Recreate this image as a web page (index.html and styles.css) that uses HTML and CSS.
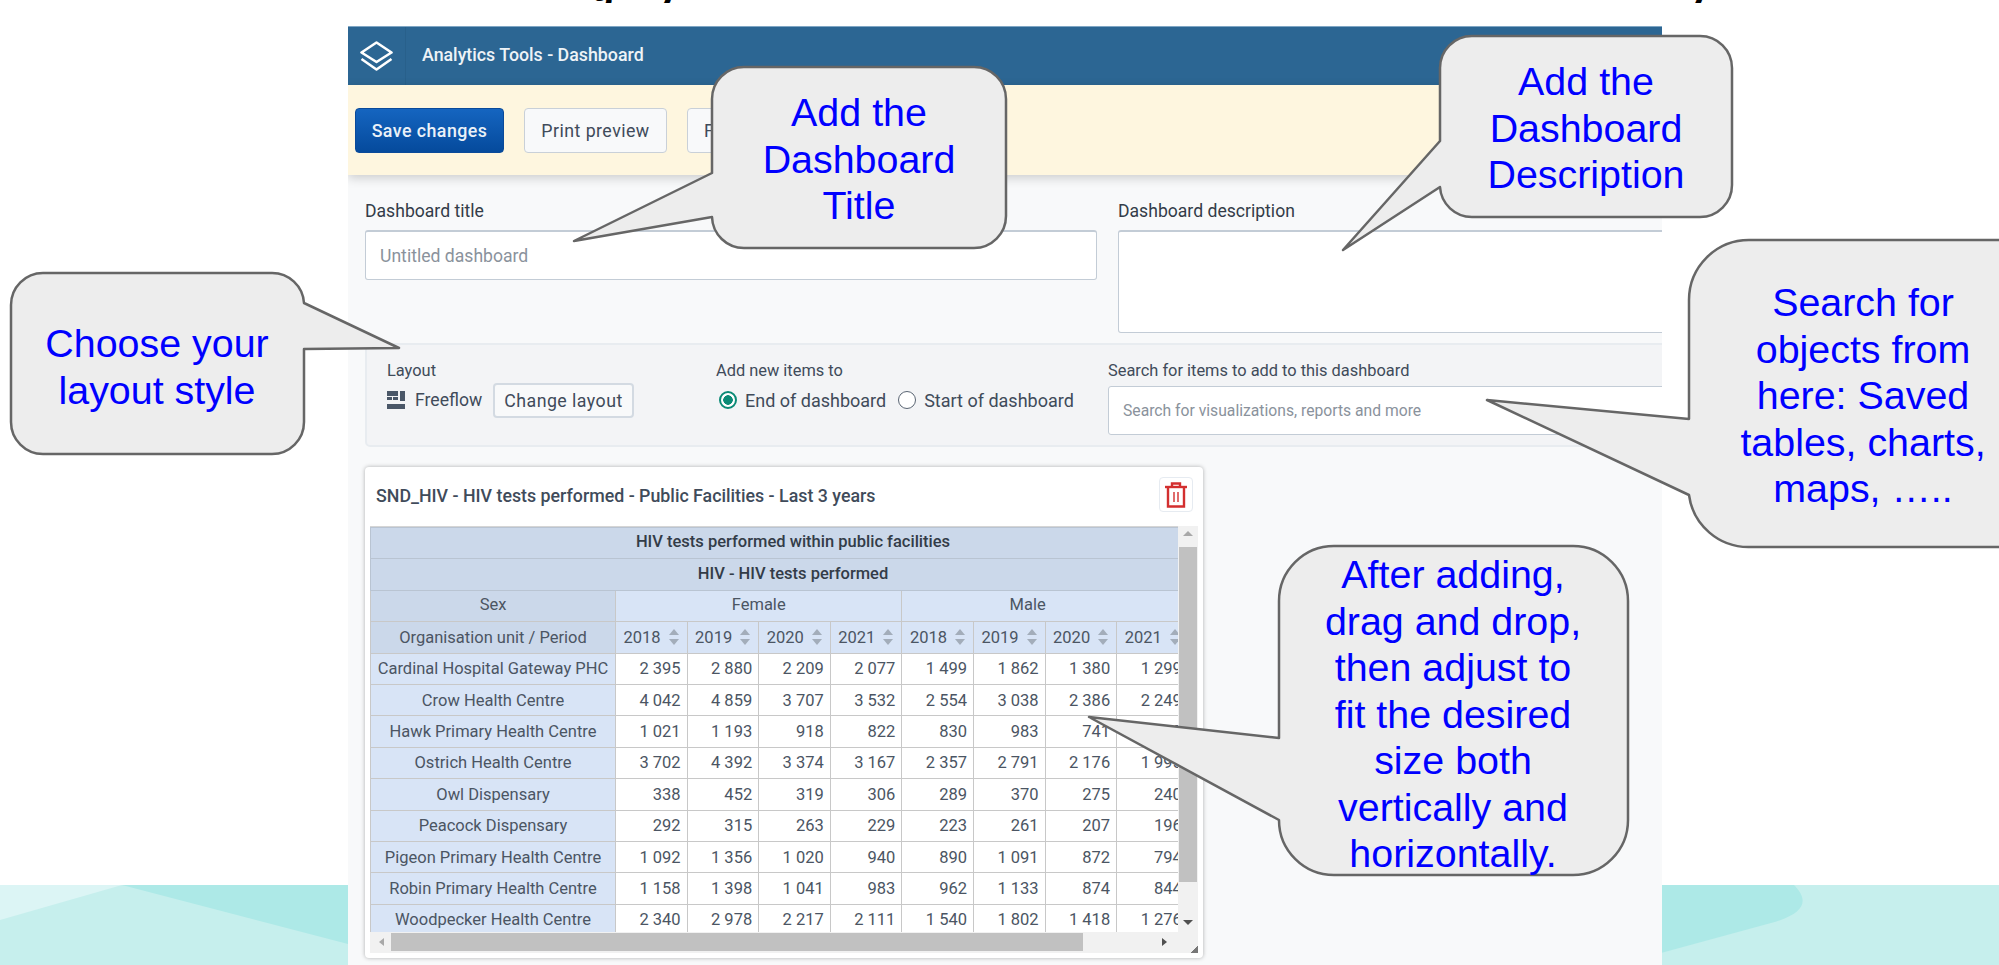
FILE: index.html
```html
<!DOCTYPE html>
<html lang="en">
<head>
  <meta charset="UTF-8">
  <meta name="viewport" content="width=device-width, initial-scale=1.0">
  <title>Analytics Tools - Dashboard</title>
  <link rel="stylesheet" href="styles.css">
</head>
<body>
  <div class="slide">
    <svg class="band" viewBox="0 0 1999 80" preserveAspectRatio="none">
      <rect width="1999" height="80" fill="#c6efed"/>
      <polygon points="0,0 122,0 0,35" fill="#dcf5f5"/>
      <polygon points="122,0 348,0 348,59" fill="#ade9e7"/>
      <path d="M1661 0 H1794 C1808 14 1808 28 1771 38 L1661 68 Z" fill="#ade9e7"/>
    </svg>

    <div class="cut-title"><span>g</span><span>y</span><span>y</span></div>

    <div class="app">
      <header class="app-header">
        <div class="logo">
          <svg width="33" height="30" viewBox="0 0 33 30" fill="none" stroke="#fff" stroke-width="2.6" stroke-linejoin="round">
            <path d="M16.5 1.5 L31.5 11.5 L16.5 21 L1.5 11.5 Z"/>
            <path d="M1.5 18 L16.5 28.5 L31.5 18"/>
          </svg>
        </div>
        <div class="app-name">Analytics Tools - Dashboard</div>
      </header>

      <div class="action-bar">
        <button class="btn btn-primary">Save changes</button>
        <button class="btn">Print preview</button>
        <button class="btn">Filter settings</button>
      </div>

      <main class="editor">
        <div class="details">
          <div class="field title-field">
            <label>Dashboard title</label>
            <input class="input" type="text" placeholder="Untitled dashboard">
          </div>
          <div class="field desc-field">
            <label>Dashboard description</label>
            <textarea class="input textarea"></textarea>
          </div>
        </div>

        <section class="toolbar">
          <div class="tool layout-tool">
            <div class="tool-label">Layout</div>
            <div class="tool-row">
              <svg class="layout-icon" width="18" height="18" viewBox="0 0 18 18" fill="#4a5768">
                <rect x="0" y="0" width="11" height="5"/>
                <rect x="0" y="6" width="5" height="3"/>
                <rect x="6" y="6" width="5" height="3"/>
                <rect x="13" y="0" width="5" height="10"/>
                <rect x="0" y="13" width="18" height="5"/>
              </svg>
              <span class="freeflow">Freeflow</span>
              <button class="btn btn-small">Change layout</button>
            </div>
          </div>
          <div class="tool position-tool">
            <div class="tool-label">Add new items to</div>
            <div class="tool-row radios">
              <span class="radio checked"></span><span class="radio-text">End of dashboard</span>
              <span class="radio"></span><span class="radio-text">Start of dashboard</span>
            </div>
          </div>
          <div class="tool search-tool">
            <div class="tool-label">Search for items to add to this dashboard</div>
            <input class="input search" type="text" placeholder="Search for visualizations, reports and more">
          </div>
        </section>

        <article class="card">
          <div class="card-head">
            <h3>SND_HIV - HIV tests performed - Public Facilities - Last 3 years</h3>
            <button class="delete">
              <svg width="24" height="26" viewBox="0 0 24 26" fill="none" stroke="#d32f2f" stroke-width="2.4">
                <path d="M1 5 H23"/>
                <path d="M8 4 V1.5 H16 V4"/>
                <path d="M4 5 V24.5 H20 V5"/>
                <path d="M10 10 V20 M14 10 V20" stroke-width="1.4"/>
              </svg>
            </button>
          </div>
          <div class="pivot">
            <div class="pivot-view">
              <table id="pivot-table"></table>
            </div>
            <div class="vbar">
              <span class="arrow-up"></span>
              <div class="vthumb"></div>
              <span class="arrow-down"></span>
            </div>
            <div class="hbar">
              <span class="arrow-left"></span>
              <div class="hthumb"></div>
              <span class="arrow-right"></span>
            </div>
            <div class="corner"></div>
          </div>
        </article>
      </main>
    </div>

    <svg class="callouts" viewBox="0 0 1999 965">
      <path d="M744 67 H974 A32 32 0 0 1 1006 99 V216 A32 32 0 0 1 974 248 H744 A32 32 0 0 1 712 217 L574 241 L712 173 V99 A32 32 0 0 1 744 67 Z"/>
      <path d="M1472 36 H1700 A32 32 0 0 1 1732 68 V185 A32 32 0 0 1 1700 217 H1472 A32 32 0 0 1 1440 187 L1343 250 L1440 141 V68 A32 32 0 0 1 1472 36 Z"/>
      <path d="M43 273 H272 A32 32 0 0 1 304 303 L399 348 L304 349 V422 A32 32 0 0 1 272 454 H43 A32 32 0 0 1 11 422 V305 A32 32 0 0 1 43 273 Z"/>
      <path d="M1749 240 H2040 V547 H1749 A60 60 0 0 1 1689 495 L1487 400 L1689 419 V300 A60 60 0 0 1 1749 240 Z"/>
      <path d="M1334 546 H1573 A55 55 0 0 1 1628 601 V820 A55 55 0 0 1 1573 875 H1334 A55 55 0 0 1 1279 820 L1089 717 L1279 738 V601 A55 55 0 0 1 1334 546 Z"/>
    </svg>

    <div class="note n-title">Add the<br>Dashboard<br>Title</div>
    <div class="note n-desc">Add the<br>Dashboard<br>Description</div>
    <div class="note n-layout">Choose your<br>layout style</div>
    <div class="note n-search">Search for<br>objects from<br>here: Saved<br>tables, charts,<br>maps, …..</div>
    <div class="note n-drag">After adding,<br>drag and drop,<br>then adjust to<br>fit the desired<br>size both<br>vertically and<br>horizontally.</div>
  </div>

  <script>
    const years = ['2018', '2019', '2020', '2021'];
    const rows = [
      ['Cardinal Hospital Gateway PHC', '2 395', '2 880', '2 209', '2 077', '1 499', '1 862', '1 380', '1 299'],
      ['Crow Health Centre', '4 042', '4 859', '3 707', '3 532', '2 554', '3 038', '2 386', '2 249'],
      ['Hawk Primary Health Centre', '1 021', '1 193', '918', '822', '830', '983', '741', '719'],
      ['Ostrich Health Centre', '3 702', '4 392', '3 374', '3 167', '2 357', '2 791', '2 176', '1 995'],
      ['Owl Dispensary', '338', '452', '319', '306', '289', '370', '275', '240'],
      ['Peacock Dispensary', '292', '315', '263', '229', '223', '261', '207', '196'],
      ['Pigeon Primary Health Centre', '1 092', '1 356', '1 020', '940', '890', '1 091', '872', '794'],
      ['Robin Primary Health Centre', '1 158', '1 398', '1 041', '983', '962', '1 133', '874', '844'],
      ['Woodpecker Health Centre', '2 340', '2 978', '2 217', '2 111', '1 540', '1 802', '1 418', '1 276']
    ];

    const sortIcon = '<svg class="sort" width="10" height="16" viewBox="0 0 10 16" fill="#a3adba"><path d="M5 0 L10 6 H0 Z"/><path d="M5 16 L0 10 H10 Z"/></svg>';
    const yearCells = years.concat(years).map(y => `<th class="year">${y}${sortIcon}</th>`).join('');

    let html = `
      <colgroup><col class="col-first">${'<col class="col-num">'.repeat(8)}</colgroup>
      <tr class="row-title"><th colspan="9" class="strong"><span class="centered">HIV tests performed within public facilities</span></th></tr>
      <tr class="row-title"><th colspan="9" class="strong"><span class="centered">HIV - HIV tests performed</span></th></tr>
      <tr class="row-sex"><th class="dim">Sex</th><th colspan="4" class="light">Female</th><th colspan="4" class="light"><span class="male">Male</span></th></tr>
      <tr class="row-year"><th class="dim">Organisation unit / Period</th>${yearCells}</tr>`;

    rows.forEach(r => {
      html += `<tr><th class="light unit">${r[0]}</th>${r.slice(1).map(v => `<td>${v}</td>`).join('')}</tr>`;
    });
    document.getElementById('pivot-table').innerHTML = html;
  </script>
</body>
</html>
```

FILE: styles.css
```css
* {
  box-sizing: border-box;
}
html, body {
  margin: 0;
  height: 100%;
  overflow: hidden;
  background-color: #fff;
}
body {
  font-family: Roboto, "Liberation Sans", sans-serif;
  color: #404b5a;
}
.slide {
  position: relative;
  width: 1999px;
  height: 965px;
  overflow: hidden;
  padding: 26px 337px 0 348px;
}
.band {
  position: absolute;
  left: 0;
  top: 885px;
  width: 1999px;
  height: 80px;
}
.cut-title {
  position: absolute;
  left: 590px;
  top: 0;
  width: 1120px;
  height: 3px;
  overflow: hidden;
  display: flex;
  gap: 42px;
  color: #000;
  font: bold 40px/20px "Liberation Sans", sans-serif;
}
.cut-title span {
  margin-top: -23px;
}
.cut-title span:last-child {
  margin-left: auto;
}

/* app */
.app {
  position: relative;
  height: 939px;
  background-color: #f8f9fa;
  overflow: hidden;
}
.app-header {
  display: flex;
  align-items: center;
  height: 59px;
  background-color: #2c6693;
  border-top: 1px solid #7fa6c4;
}
.logo {
  display: flex;
  align-items: center;
  justify-content: center;
  width: 58px;
  height: 100%;
  border-right: 1px solid #28608b;
}
.app-name {
  margin: 0 0 4px 16px;
  color: #eef3f7;
  font-size: 17.8px;
  font-weight: 500;
}
.action-bar {
  display: flex;
  gap: 20px;
  align-items: center;
  height: 90px;
  padding-left: 7px;
  background-color: #fef6df;
  box-shadow: 0 3px 10px rgba(0, 0, 0, 0.18);
  position: relative;
}
.btn {
  height: 45px;
  padding: 0 16px;
  border: 1px solid #c9d0d8;
  border-radius: 4px;
  background-color: #f8f9fa;
  color: #404b5a;
  font-family: inherit;
  font-size: 17.8px;
  letter-spacing: 0.45px;
  white-space: nowrap;
}
.btn-primary {
  width: 149px;
  padding: 0;
  border-color: #0a4a9a;
  background: linear-gradient(#1565c0, #054a9c);
  color: #eaf1f8;
  font-weight: 500;
}
.btn:nth-child(2) {
  width: 143px;
  padding: 0;
}
.btn-small {
  width: 141px;
  height: 35px;
  padding: 0;
  border: 2px solid #d3dae2;
}

/* form */
.editor {
  height: 790px;
}
.details {
  display: flex;
  gap: 21px;
  padding: 26px 0 0 17px;
  height: 168px;
}
.field label {
  display: block;
  height: 29px;
  font-size: 17.6px;
  line-height: 20px;
  color: #333c48;
}
.title-field {
  width: 732px;
  flex-shrink: 0;
}
.desc-field {
  width: 600px;
  flex-shrink: 0;
}
.input {
  display: block;
  width: 100%;
  height: 50px;
  padding: 0 14px;
  border: 1px solid #c3ccd6;
  border-top-width: 2px;
  border-radius: 3px;
  background-color: #fff;
  font-family: inherit;
  font-size: 17.6px;
}
.input::placeholder {
  color: #8a929c;
  opacity: 1;
}
.textarea {
  height: 103px;
  resize: none;
}
.toolbar {
  display: flex;
  width: 1320px;
  height: 104px;
  margin-left: 17px;
  padding-top: 16px;
  border: 2px solid #e8ecf0;
  border-radius: 5px;
  background-color: #f3f4f6;
}
.tool-label {
  font-size: 16.4px;
  line-height: 20px;
  color: #404b5a;
}
.tool-row {
  display: flex;
  align-items: center;
  height: 36px;
  margin-top: 1px;
  font-size: 17.6px;
  white-space: nowrap;
}
.layout-tool {
  width: 349px;
  padding-left: 20px;
}
.layout-icon {
  margin-right: 10px;
}
.freeflow {
  width: 78px;
}
.position-tool {
  width: 392px;
}
.radios {
  padding-left: 3px;
  font-size: 18px;
}
.radio {
  width: 18px;
  height: 18px;
  margin-right: 8px;
  border: 1px solid #5a6573;
  border-radius: 50%;
  background-color: #fff;
  flex-shrink: 0;
}
.radio.checked {
  border: 2px solid #0b8a76;
  background: radial-gradient(circle, #0b8a76 0 4.5px, #fff 5px);
}
.radio-text {
  margin-right: 12px;
}
.search-tool {
  flex: 1;
}
.search {
  height: 49px;
  margin-top: 5px;
  border-top-width: 1px;
  font-size: 15.7px;
}

/* card */
.card {
  width: 838px;
  height: 491px;
  margin: 20px 0 0 17px;
  padding: 0 5px;
  background-color: #fff;
  border-radius: 4px;
  box-shadow: 0 0 4px rgba(0, 0, 0, 0.3);
}
.card-head {
  display: flex;
  align-items: flex-start;
  justify-content: space-between;
  height: 59px;
  padding: 10px 5px 0 6px;
}
.card-head h3 {
  margin: 9px 0 0;
  font-size: 17.8px;
  line-height: 20px;
  font-weight: 500;
  color: #404b5a;
}
.delete {
  display: flex;
  align-items: center;
  justify-content: center;
  width: 34px;
  height: 35px;
  padding: 0;
  border: 1px solid #e6ebf1;
  border-radius: 4px;
  background-color: #fff;
}

/* pivot table */
.pivot {
  display: grid;
  grid-template-columns: 808px 20px;
  grid-template-rows: 406px 21px;
}
.pivot-view {
  overflow: hidden;
  border-top: 1px solid #d5d5d5;
}
table {
  border-collapse: collapse;
  table-layout: fixed;
  width: 818px;
  font-size: 16.5px;
  color: #4b5563;
}
.col-first {
  width: 245px;
}
.col-num {
  width: 71.6px;
}
tr {
  height: 31.4px;
}
th, td {
  padding: 0 5px;
  border: 1px solid #c8c8c8;
  font-weight: 400;
  white-space: nowrap;
  overflow: hidden;
}
td {
  text-align: right;
  background-color: #fff;
  padding-right: 6px;
}
.row-title th, .row-sex th {
  padding-bottom: 3px;
}
.row-title th {
  background-color: #cbd8ea;
  color: #333c48;
  font-weight: 500;
  text-align: left;
  padding-left: 0;
  border-color: #b9c4d2;
}
.centered {
  display: block;
  width: 818px;
  padding-left: 26px;
  text-align: center;
}
.dim {
  background-color: #cbd8ea;
}
.light, .year {
  background-color: #d8e4f6;
}
.unit {
  padding: 0;
}
.male {
  display: block;
  margin-left: -35px;
}
.year {
  padding: 0 8px 0 0;
  text-align: right;
}
.sort {
  margin-left: 8px;
  vertical-align: -2px;
}
.vbar, .hbar {
  position: relative;
  background-color: #f1f1f1;
}
.vthumb {
  position: absolute;
  left: 1px;
  top: 21px;
  width: 18px;
  height: 335px;
  background-color: #c1c1c1;
}
.hthumb {
  position: absolute;
  left: 21px;
  top: 1px;
  width: 692px;
  height: 18px;
  background-color: #c1c1c1;
}
.arrow-up, .arrow-down, .arrow-left, .arrow-right {
  position: absolute;
  width: 0;
  height: 0;
  border: 4px solid transparent;
}
.arrow-up {
  top: 5px;
  left: 5px;
  border-width: 0 5px 5px;
  border-bottom-color: #a8a8a8;
}
.arrow-down {
  bottom: 7px;
  left: 5px;
  border-width: 5px 5px 0;
  border-top-color: #505050;
}
.arrow-left {
  left: 9px;
  top: 6px;
  border-width: 4px 5px 4px 0;
  border-right-color: #a8a8a8;
}
.arrow-right {
  right: 11px;
  top: 6px;
  border-width: 4px 0 4px 5px;
  border-left-color: #505050;
}
.corner {
  background: linear-gradient(135deg, #f1f1f1 82%, #777 82%);
}

/* callouts */
.callouts {
  position: absolute;
  left: 0;
  top: 0;
  width: 1999px;
  height: 965px;
}
.callouts path {
  fill: #ededed;
  stroke: #666;
  stroke-width: 2.5;
  stroke-linejoin: round;
}
.note {
  position: absolute;
  width: 340px;
  margin-left: -170px;
  text-align: center;
  color: #0000ff;
  font: 39.4px/46.5px "Liberation Sans", Arial, sans-serif;
}
.n-title {
  left: 859px;
  top: 89px;
}
.n-desc {
  left: 1586px;
  top: 58px;
}
.n-layout {
  left: 157px;
  top: 320px;
}
.n-search {
  left: 1863px;
  top: 279px;
}
.n-drag {
  left: 1453px;
  top: 551px;
}
```
